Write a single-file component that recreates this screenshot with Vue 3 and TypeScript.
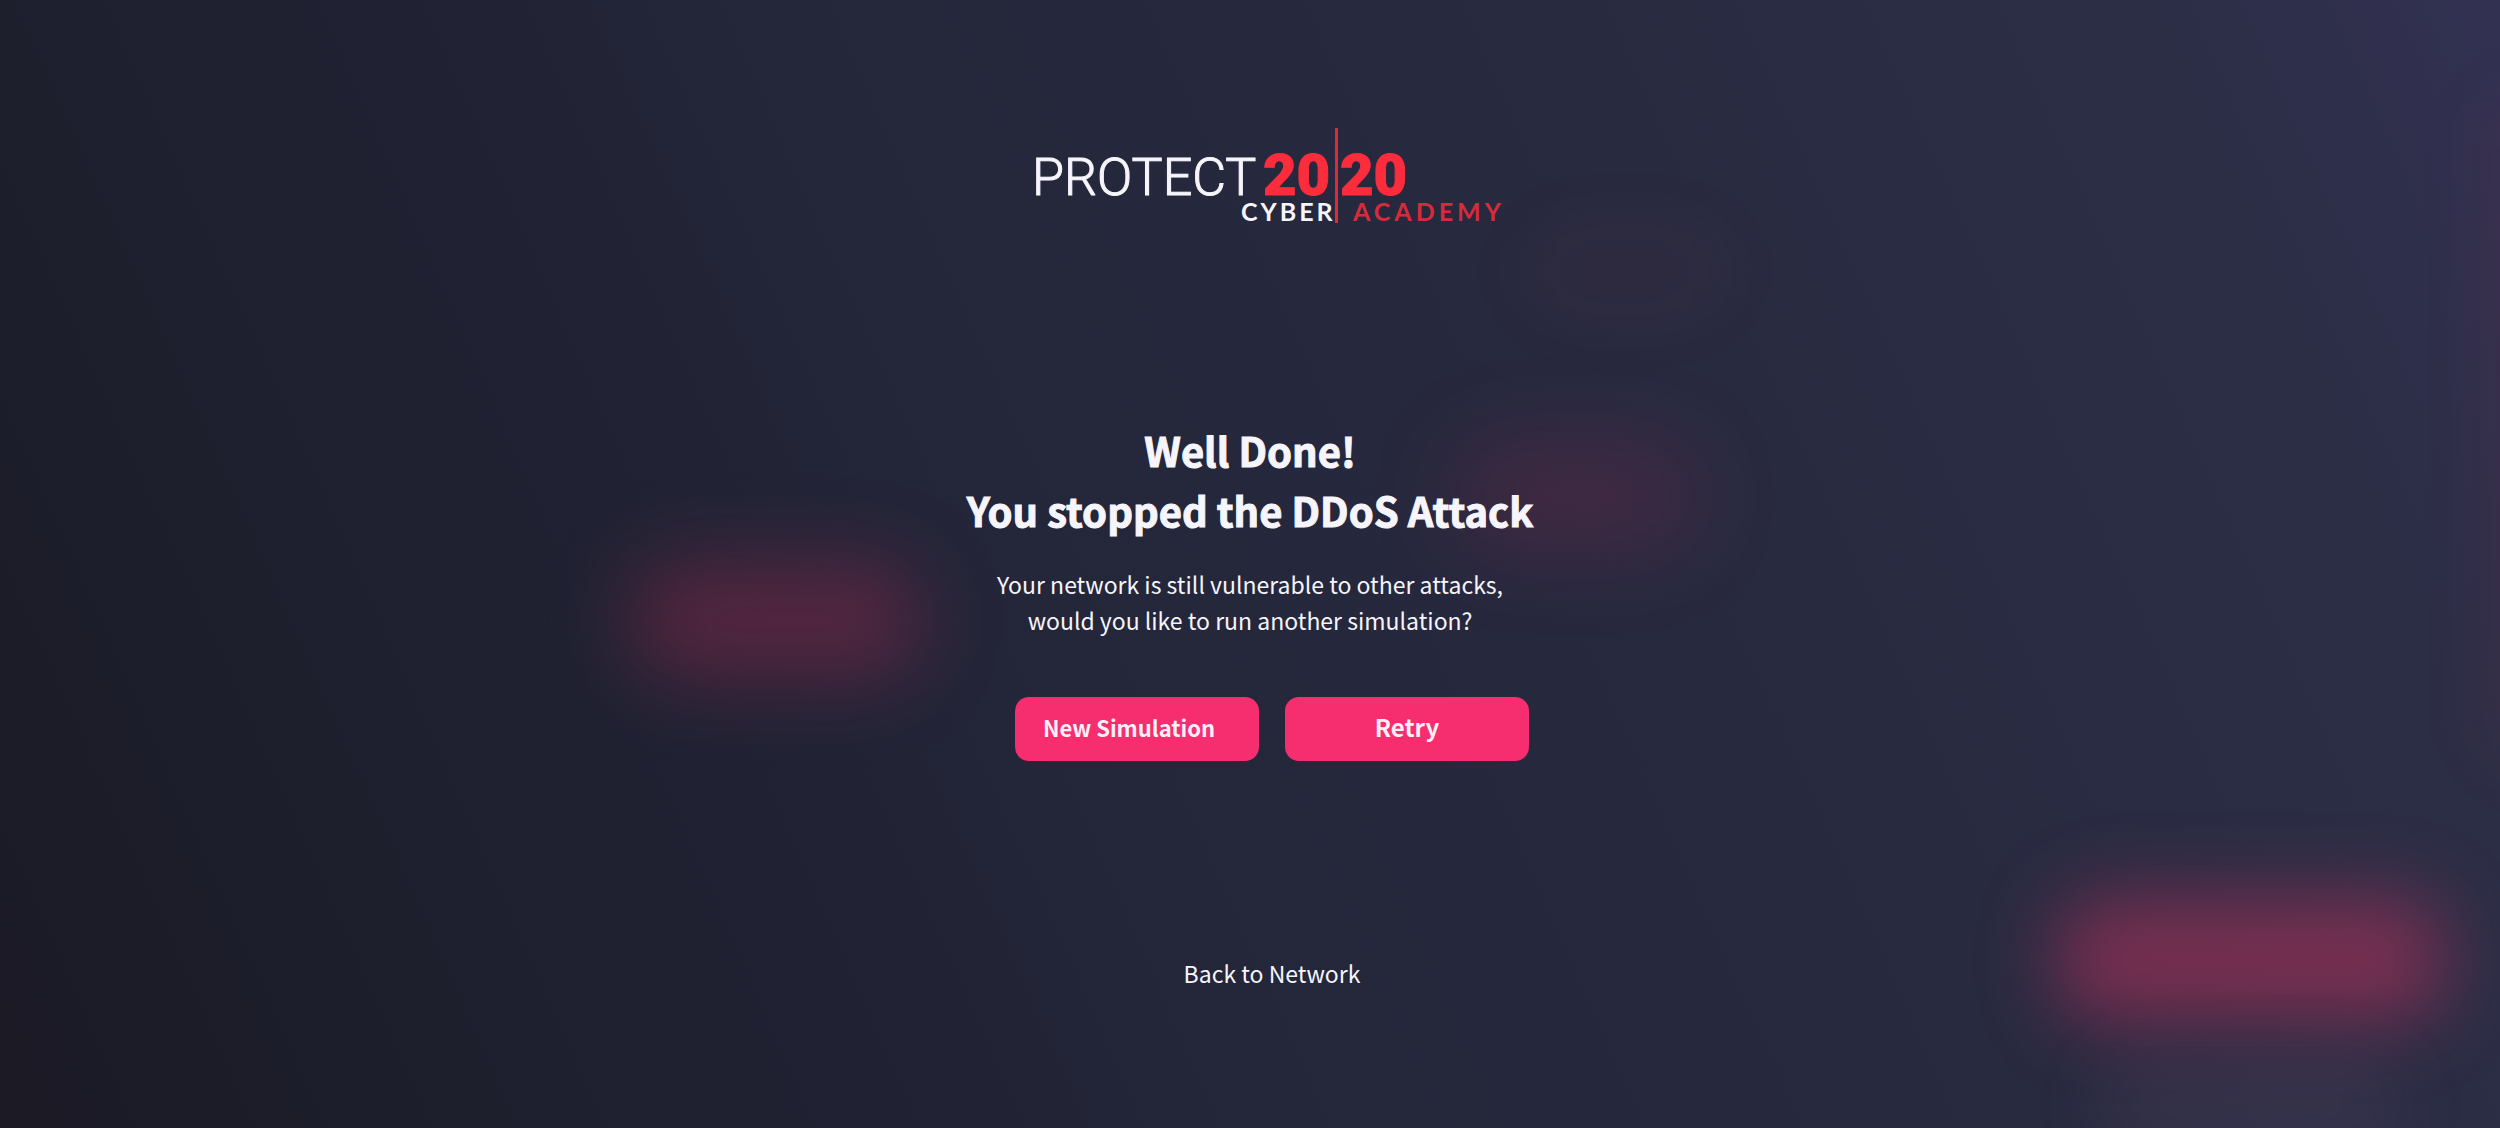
<script setup lang="ts">
interface Glow {
  name: string
}

const glows: Glow[] = [
  { name: 'left' },
  { name: 'center' },
  { name: 'upper' },
  { name: 'corner' },
  { name: 'floor' },
  { name: 'edge' },
]

const headline: string[] = ['Well Done!', 'You stopped the DDoS Attack']
const details: string[] = [
  'Your network is still vulnerable to other attacks,',
  'would you like to run another simulation?',
]
</script>

<template>
  <main class="page">
    <div class="backdrop" aria-hidden="true">
      <span v-for="glow in glows" :key="glow.name" class="glow" :class="glow.name"></span>
    </div>

    <header class="row">
      <svg class="logo" viewBox="0 0 480 104" role="img" aria-label="Protect 2020 Cyber Academy">
        <text class="protect" x="0" y="71">PROTECT</text>
        <text class="year" x="231" y="71">20</text>
        <text class="year" x="308" y="71">20</text>
        <text class="sub light" x="209" y="97">CYBER</text>
        <text class="sub" x="321" y="97">ACADEMY</text>
        <rect class="bar" x="303" y="4" width="3" height="95" />
      </svg>
    </header>

    <section class="message">
      <h1>
        <span v-for="line in headline" :key="line">{{ line }}</span>
      </h1>
      <p>
        <span v-for="line in details" :key="line">{{ line }}</span>
      </p>
    </section>

    <div class="row actions">
      <button type="button" class="new">New Simulation</button>
      <button type="button" class="retry">Retry</button>
    </div>

    <nav class="row back">
      <a href="#network">Back to Network</a>
    </nav>
  </main>
</template>

<style>
body {
  margin: 0;
  background: #25273a;
}
</style>

<style scoped>
.page {
  position: relative;
  display: flex;
  flex-direction: column;
  align-items: center;
  box-sizing: border-box;
  min-height: 100vh;
  padding: 124px 24px 110px;
  overflow: hidden;
  color: #f6f5fc;
  font-family: "Noto Sans CJK SC", "Open Sans", sans-serif;
  background: linear-gradient(66deg, #1b1a25 0%, #1e202f 20%, #24263a 44%, #282a40 68%, #2c2e46 88%, #323152 100%);
}

.backdrop {
  position: absolute;
  inset: 0;
  overflow: hidden;
}

.glow {
  position: absolute;
  border-radius: 50px;
  transform: translate(-50%, -50%);
}

.left {
  left: 31%;
  top: 55%;
  width: 290px;
  height: 116px;
  background: rgba(226, 44, 96, 0.27);
  filter: blur(40px);
}

.center {
  left: 63%;
  top: 44%;
  width: 240px;
  height: 100px;
  background: rgba(226, 44, 96, 0.16);
  filter: blur(44px);
}

.upper {
  left: 65%;
  top: 24%;
  width: 200px;
  height: 90px;
  background: rgba(226, 84, 64, 0.04);
  filter: blur(34px);
}

.corner {
  left: 90%;
  top: 85%;
  width: 390px;
  height: 124px;
  background: rgba(226, 52, 100, 0.43);
  filter: blur(38px);
}

.floor {
  left: 90%;
  top: 98%;
  width: 300px;
  height: 90px;
  background: rgba(120, 90, 120, 0.16);
  filter: blur(32px);
}

.edge {
  left: 101%;
  top: 38%;
  width: 90px;
  height: 680px;
  background: rgba(226, 44, 64, 0.06);
  filter: blur(30px);
}

.row,
.message {
  position: relative;
}

/* The logo, the buttons and the link share an axis right of the message's. */
.row {
  display: flex;
  justify-content: center;
  padding-left: 44px;
}

.logo {
  display: block;
  width: 480px;
  height: 104px;
  overflow: visible;
}

.protect {
  fill: #f6f5fc;
  stroke: #f6f5fc;
  stroke-width: 1px;
  font-family: Roboto, sans-serif;
  font-size: 52px;
  font-weight: 300;
}

.year {
  fill: #fb2d3c;
  stroke: #fb2d3c;
  stroke-width: 1px;
  font-family: Roboto, sans-serif;
  font-size: 58px;
  font-weight: 900;
}

.sub {
  fill: #d92a3a;
  font-family: Lato, sans-serif;
  font-size: 25px;
  font-weight: 700;
  letter-spacing: 4px;
}

.light {
  fill: #f6f5fc;
  letter-spacing: 3px;
}

.bar {
  fill: #e02a3b;
}

.message {
  margin-top: 192px;
  text-align: center;
}

h1,
p {
  display: flex;
  flex-direction: column;
  margin: 0;
}

h1 {
  font-size: 40px;
  font-weight: 700;
  line-height: 60px;
  -webkit-text-stroke: 1px currentColor;
}

p {
  margin-top: 26px;
  font-size: 23px;
  line-height: 36px;
}

.actions {
  gap: 26px;
  margin-top: 59px;
}

button {
  width: 244px;
  height: 64px;
  padding: 0 28px 4px;
  border: 0;
  border-radius: 14px;
  color: #fff0f8;
  background: #f62d6e;
  font-family: inherit;
  font-size: 24px;
  font-weight: 700;
  line-height: 32px;
  white-space: nowrap;
}

.new {
  text-align: left;
  font-size: 22px;
}

.back {
  margin-top: 194px;
}

a {
  color: inherit;
  font-size: 23px;
  line-height: 36px;
  text-decoration: none;
}
</style>
